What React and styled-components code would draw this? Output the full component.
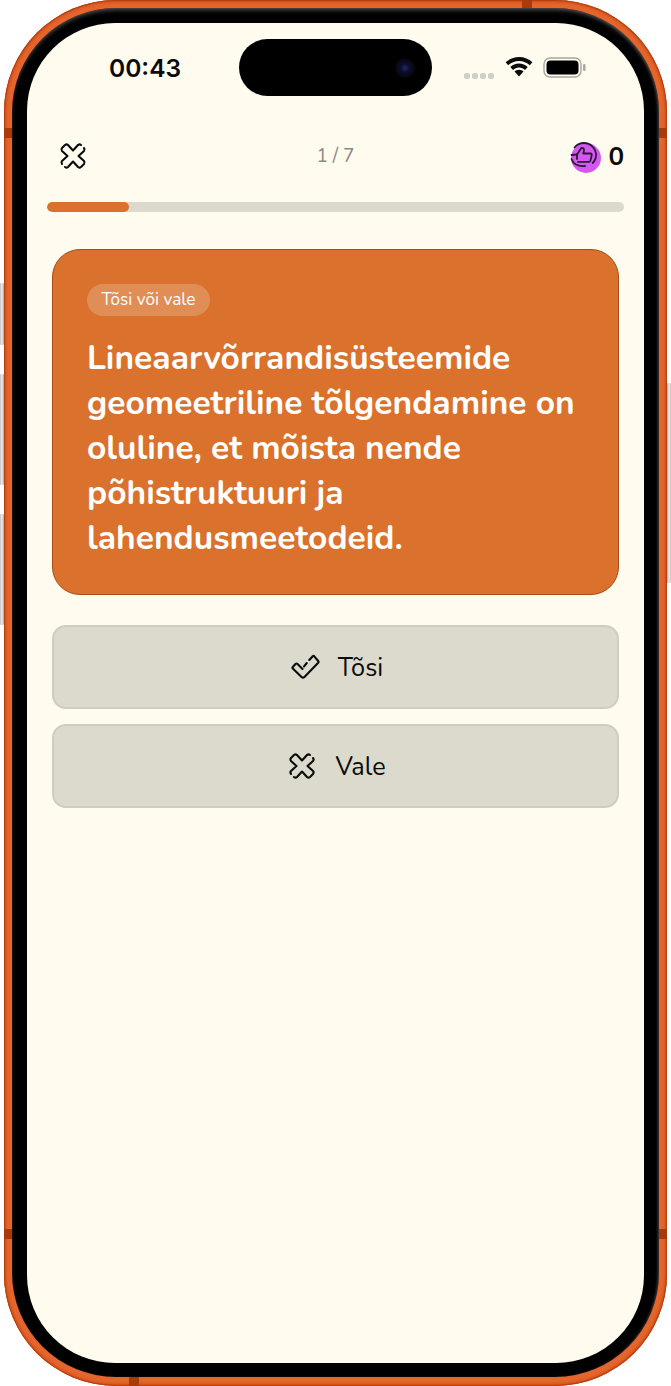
import React from "react";
import styled, { createGlobalStyle } from "styled-components";

const Global = createGlobalStyle`
  html, body { margin: 0; padding: 0; background: #fff; }
  body { font-family: "Nunito", "Lato", "Noto Sans", sans-serif; }
  * { box-sizing: border-box; }
`;

const Device = styled.div`
  position: relative;
  width: 663px;
  height: 1386px;
  margin-left: 4px;
`;
const SideButton = styled.div`
  position: absolute;
  top: ${(p) => p.$top}px;
  height: ${(p) => p.$h}px;
  width: 4px;
  ${(p) => (p.$right ? "right: -4px;" : "left: -4px;")}
  background: linear-gradient(${(p) => (p.$right ? "90deg" : "270deg")}, #a8a8a8, #efefef 55%, #bbb);
  border-radius: 1px;
`;
const Shell = styled.div`
  position: relative;
  height: 100%;
  padding: 8px 8px 9px;
  border-radius: 112px;
  background: #e5652d;
  box-shadow: inset 0 0 0 1px #b8400f, inset 0 0 3px 2px #c64d18;
`;
const Band = styled.div`
  position: absolute;
  background: #a93a0c;
  ${(p) => p.$css}
`;
const Bezel = styled.div`
  height: 100%;
  padding: 15px 15px 14px;
  border-radius: 104px;
  background: #000;
  box-shadow: inset 0 3px 4px -1px rgba(130, 130, 130, 0.6), inset -2px 0 3px -1px rgba(110, 110, 110, 0.45);
`;
const Screen = styled.div`
  position: relative;
  height: 100%;
  border-radius: 88px;
  background: #fffcef;
  padding: 0 20px;
  overflow: hidden;
`;
const StatusBar = styled.div`
  height: 90px;
  display: flex;
  align-items: flex-start;
  justify-content: space-between;
  padding: 29px 37px 0 62px;
`;
const Clock = styled.div`
  font: 600 24.500px/32px "Inter", sans-serif;
  color: #0b0b0b;
`;
const Island = styled.div`
  position: absolute;
  left: 212px;
  top: 16px;
  width: 193px;
  height: 57px;
  border-radius: 29px;
  background: #000;
  display: flex;
  align-items: center;
  justify-content: flex-end;
  padding-right: 17px;
`;
const Lens = styled.div`
  width: 20px;
  height: 20px;
  border-radius: 50%;
  background: radial-gradient(circle, #24286e 0, #0d0e2c 30%, #07070f 65%, #000 100%);
`;
const StatusIcons = styled.div`
  display: flex;
  align-items: flex-start;
  gap: 10px;
  padding-top: 5px;
`;
const Dots = styled.div`
  display: flex;
  gap: 2px;
  margin-top: 16px;
  margin-right: 1px;
`;
const Dot = styled.span`
  width: 6px;
  height: 6px;
  border-radius: 2px;
  background: #d1d0c8;
`;
const TopBar = styled.div`
  height: 89px;
  display: flex;
  align-items: flex-start;
  justify-content: space-between;
  padding-top: 28px;
  position: relative;
`;
const IconButton = styled.div`
  width: 32px;
  height: 32px;
  margin-left: 10px;
  display: flex;
  align-items: center;
  justify-content: center;
  margin-top: -1px;
`;
const Counter = styled.div`
  position: absolute;
  left: 0;
  right: 0;
  top: 29px;
  text-align: center;
  font-size: 19px;
  line-height: 28px;
  color: #8a8a82;
`;
const Score = styled.div`
  display: flex;
  align-items: flex-start;
  gap: 6px;
  padding-top: 2px;
  font-size: 26px;
  font-weight: 700;
  line-height: 28px;
  color: #0b0b0b;
`;
const ThumbBox = styled.svg`
  width: 32px;
  height: 32px;
  margin-top: -1px;
`;
const Track = styled.div`
  height: 10px;
  border-radius: 5px;
  background: #dcdacd;
  overflow: hidden;
`;
const Fill = styled.div`
  height: 100%;
  border-radius: 5px;
  background: #da7130;
`;
const Content = styled.div`
  padding: 37px 5px 0;
  display: flex;
  flex-direction: column;
  gap: 15px;
`;
const Card = styled.div`
  background: #da712c;
  border: 1px solid #a84d18;
  border-radius: 28px;
  padding: 34px 34px 33px;
  margin-bottom: 15px;
`;
const Pill = styled.div`
  display: inline-block;
  height: 32px;
  padding: 0 14.500px;
  border-radius: 16px;
  background: rgba(255, 255, 255, 0.2);
  color: #fff;
  font-size: 17.200px;
  line-height: 32px;
`;
const Title = styled.div`
  margin-top: 20px;
  color: #fff;
  font-size: 33.600px;
  font-weight: 700;
  line-height: 45px;
`;
const Answer = styled.div`
  height: 84px;
  border-radius: 14px;
  background: #dcdacd;
  border: 2.500px solid #cfcdbf;
  display: flex;
  align-items: center;
  justify-content: center;
  gap: 18px;
  padding-left: 2px;
  font-size: 25.300px;
  color: #0b0b0b;
`;

const CrossIcon = ({ size = 30 }) => (
  <svg width={size} height={size} viewBox="0 0 30 30" fill="none" stroke="#0b0b0b" strokeWidth="2.1" strokeLinecap="round" strokeLinejoin="round">
    <path d="M20 4 Q21.500 2.800 23 4" />
    <path d="M26 7 Q27.200 8.500 26 10 L20.500 15 L26 20 Q27.200 21.500 26 23 L23 26 Q21.500 27.200 20 26 L15 20.500 L10 26 Q8.500 27.200 7 26" />
    <path d="M4 23 Q2.800 21.500 4 20 L9.500 15 L4 10 Q2.800 8.500 4 7 L7 4 Q8.500 2.800 10 4 L15 9.500 L20 4" />
  </svg>
);
const CheckIcon = () => (
  <svg width="30" height="30" viewBox="0 0 30 30" fill="none" stroke="#0b0b0b" strokeWidth="2.1" strokeLinecap="round" strokeLinejoin="round">
    <path d="M12.500 17 L7.300 11.800 Q6.500 11.200 5.700 11.800 L2.800 15 Q2 15.800 2.800 16.500 L11.800 25.200 Q13 26.200 14.200 25.200 L28.200 10.700 Q29 9.800 28.200 9 L24.300 4.300 Q23.500 3.500 22.700 4.300 L19.300 8" />
    <path d="M16.800 11 L14 14.500" />
  </svg>
);
const ThumbIcon = () => (
  <ThumbBox viewBox="0 0 32 32" fill="none">
    <circle cx="16" cy="16" r="15" fill="#d457f2" />
    <g transform="translate(-1 -1)" stroke="#2a1733" strokeWidth="1.800" strokeLinecap="round" strokeLinejoin="round">
      <path d="M5.500 6.500C8 3.500 11.500 2 15 2c6.500 0 12 5.500 12 12 0 3-1 5.800-3.300 8" />
      <path d="M16 25c-6 .5-11.500-1.800-13.500-7" />
      <path d="M2.500 14 8 13.500l4-6c.6-1 3.500-.5 3 2l-.8 3h7.300c1 0 1.500.8 1.200 1.800l-1.300 5.500c-.2.700-.8 1.100-1.500 1.100H9" fill="#d457f2" />
      <path d="M8 13.500V18" />
    </g>
  </ThumbBox>
);
const Wifi = () => (
  <svg width="28" height="20" viewBox="0 0 28 20" fill="#0b0b0b">
    <path d="M14 0C8.700 0 4 2 .6 5.300l2.600 2.900C6 5.500 9.800 3.900 14 3.900s8 1.600 10.800 4.300l2.600-2.900C24 2 19.300 0 14 0Z" />
    <path d="M14 6.400c-3.400 0-6.500 1.300-8.700 3.500l2.700 3c1.600-1.500 3.700-2.400 6-2.400s4.400.9 6 2.400l2.700-3C20.500 7.700 17.400 6.400 14 6.400Z" />
    <path d="M14 12.800c-1.800 0-3.400.7-4.500 1.800L14 19.600l4.500-5c-1.100-1.100-2.700-1.800-4.500-1.800Z" />
  </svg>
);
const Battery = () => (
  <svg width="44" height="21" viewBox="0 0 44 21" fill="none">
    <rect x="1" y="1" width="37" height="19" rx="6" stroke="#a8a79c" strokeWidth="1.400" />
    <rect x="3.500" y="3.500" width="32" height="14" rx="4" fill="#000" />
    <rect x="40" y="7" width="2.500" height="7" rx="1.200" fill="#a8a79c" />
  </svg>
);

const App = () => (
  <Device>
    <Global />
    <SideButton $top={283} $h={62} />
    <SideButton $top={374} $h={111} />
    <SideButton $top={514} $h={111} />
    <SideButton $right $top={383} $h={200} />
    <Shell>
      <Band $css="left: 0; top: 128px; width: 8px; height: 10px;" />
      <Band $css="right: 0; top: 128px; width: 8px; height: 10px;" />
      <Band $css="left: 0; bottom: 147px; width: 8px; height: 10px;" />
      <Band $css="right: 0; bottom: 147px; width: 8px; height: 10px;" />
      <Band $css="right: 135px; top: 0; width: 10px; height: 8px;" />
      <Band $css="left: 125px; bottom: 0; width: 10px; height: 9px;" />
      <Bezel>
        <Screen>
          <Island><Lens /></Island>
          <StatusBar>
            <Clock>00:43</Clock>
            <StatusIcons>
              <Dots><Dot /><Dot /><Dot /><Dot /></Dots>
              <Wifi />
              <Battery />
            </StatusIcons>
          </StatusBar>
          <TopBar>
            <IconButton><CrossIcon /></IconButton>
            <Counter>1 / 7</Counter>
            <Score><ThumbIcon />0</Score>
          </TopBar>
          <Track><Fill style={{ width: `${(1 / 7) * 100}%` }} /></Track>
          <Content>
            <Card>
              <Pill>Tõsi või vale</Pill>
              <Title>Lineaarvõrrandisüsteemide geomeetriline tõlgendamine on oluline, et mõista nende põhistruktuuri ja lahendusmeetodeid.</Title>
            </Card>
            <Answer><CheckIcon />Tõsi</Answer>
            <Answer><CrossIcon />Vale</Answer>
          </Content>
        </Screen>
      </Bezel>
    </Shell>
  </Device>
);

export default App;
